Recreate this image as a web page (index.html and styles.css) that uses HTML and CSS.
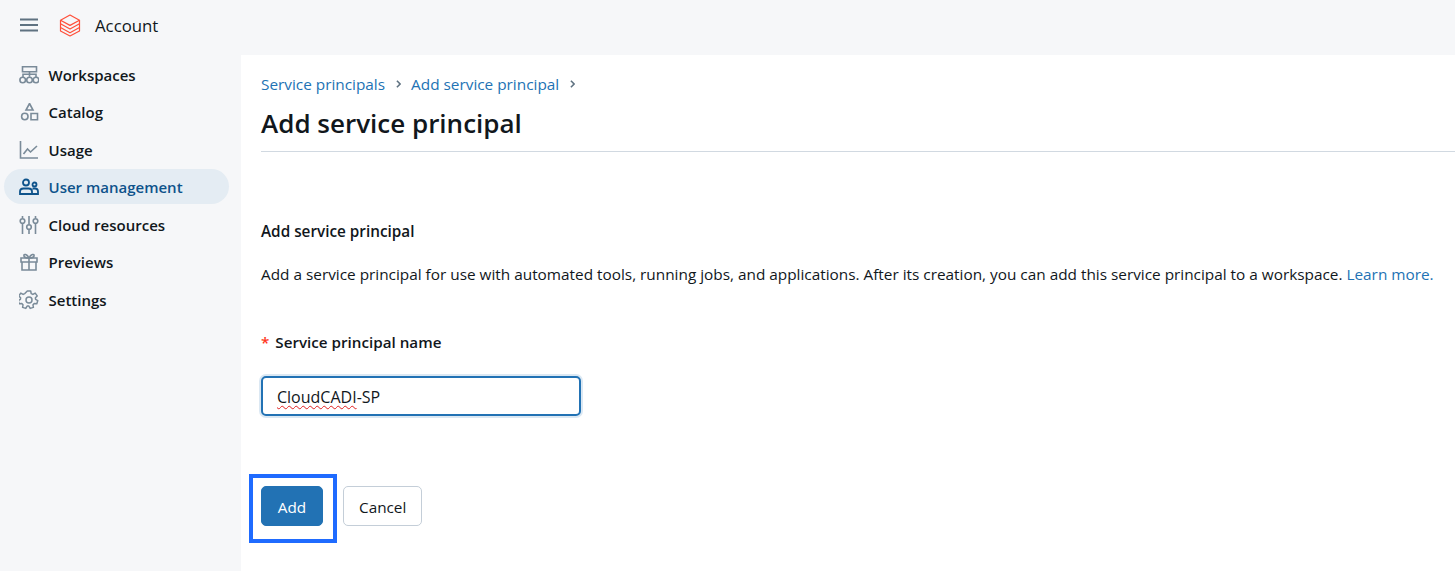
FILE: index.html
```html
<!DOCTYPE html>
<html lang="en">

<head>
    <meta charset="UTF-8">
    <title>Add service principal - Account</title>
    <link rel="stylesheet" href="styles.css">
</head>

<body>
    <header class="topbar">
        <svg class="menu-icon" width="18" height="14" viewBox="0 0 18 14" fill="none" stroke="#5f7281" stroke-width="1.8">
            <path d="M0 1.500h18M0 7h18M0 12.500h18" />
        </svg>
        <svg class="logo" width="22" height="23" viewBox="0 0 22 23" fill="none" stroke="#ff4f3a" stroke-width="1.2" stroke-linejoin="round">
            <path d="M11 1l9.500 5.200L11 11.400 1.500 6.200z" />
            <path d="M1.500 9.800l9.500 5.300 9.500-5.300" />
            <path d="M1.500 13.500l9.500 5.300 9.500-5.300" />
            <path d="M1.500 6.200v10.800l9.500 5 9.500-5V6.200" />
        </svg>
        <span class="account">Account</span>
    </header>

    <div class="layout">
        <nav class="sidebar">
            <a class="nav-item">
                <svg width="20" height="18" viewBox="0 0 20 18" fill="none" stroke="#7a8b99" stroke-width="1.6">
                    <path d="M3.500 0.800h14v5h-14zM10.500 5.800v5M4 11V8.300h13V11" />
                    <circle cx="3.700" cy="14" r="2.800" />
                    <circle cx="10.500" cy="14" r="2.800" />
                    <circle cx="17" cy="14" r="2.800" />
                </svg>
                Workspaces
            </a>
            <a class="nav-item">
                <svg width="20" height="18" viewBox="0 0 20 18" fill="none" stroke="#7a8b99" stroke-width="1.6">
                    <path d="M10.500 0.500l3.500 6.500H7z" />
                    <circle cx="5.800" cy="13.500" r="3.200" />
                    <path d="M12 10.500h6.500v6.200H12z" />
                </svg>
                Catalog
            </a>
            <a class="nav-item">
                <svg width="20" height="18" viewBox="0 0 20 18" fill="none" stroke="#7a8b99" stroke-width="1.6">
                    <path d="M1.500 0v17h17.500" />
                    <path d="M4.500 13l4-5 3 3 6.500-6" />
                </svg>
                Usage
            </a>
            <a class="nav-item active">
                <svg width="20" height="18" viewBox="0 0 20 18" fill="none" stroke="#0e538b" stroke-width="1.8">
                    <circle cx="7" cy="4.500" r="3" />
                    <circle cx="15.500" cy="6.500" r="2" />
                    <path d="M1 16v-2.500c0-2 1.500-3 3.500-3h5c2 0 3.500 1 3.500 3V16zM13.500 10.500H16c2 0 3 1 3 3V16h-6" />
                </svg>
                User management
            </a>
            <a class="nav-item">
                <svg width="20" height="18" viewBox="0 0 20 18" fill="none" stroke="#7a8b99" stroke-width="1.6">
                    <path d="M3.500 0v2M3.500 8v10M10 0v8M10 14v4M16.500 0v2M16.500 8v10" />
                    <circle cx="3.500" cy="5" r="2.300" />
                    <circle cx="10" cy="11" r="2.300" />
                    <circle cx="16.500" cy="5" r="2.300" />
                </svg>
                Cloud resources
            </a>
            <a class="nav-item">
                <svg width="20" height="18" viewBox="0 0 20 18" fill="none" stroke="#7a8b99" stroke-width="1.6">
                    <path d="M2 5h16v4H2zM3 9v8h14V9M10 5v12" />
                    <path d="M10 5C8 1 4.500 0.500 5 3c0.300 1.500 3 2 5 2zM10 5c2-4 5.500-4.500 5-2-0.300 1.500-3 2-5 2z" />
                </svg>
                Previews
            </a>
            <a class="nav-item">
                <svg width="20" height="20" viewBox="0 0 20 20" fill="none" stroke="#7a8b99" stroke-width="1.5" stroke-linejoin="round">
                    <circle cx="10" cy="10" r="3" />
                    <path d="M8.300 1h3.400l.5 2.600 1.700.8 2.300-1.300 2 2.800-1.800 1.900.2 1.600 2.200 1.200-1 3.100-2.600-.2-1.200 1.300.4 2.600-3.200 1-1.300-2.300h-1.800l-1.300 2.300-3.200-1 .4-2.600-1.200-1.300-2.600.2-1-3.100 2.200-1.200.2-1.600-1.800-1.900 2-2.800 2.300 1.300 1.700-.8z" />
                </svg>
                Settings
            </a>
        </nav>

        <main class="content">
            <div class="breadcrumbs">
                <a class="link">Service principals</a>
                <svg class="sep" width="5" height="8" viewBox="0 0 6 10" fill="none" stroke="#5f7281" stroke-width="2">
                    <path d="M1 1l4 4-4 4" />
                </svg>
                <a class="link">Add service principal</a>
                <svg class="sep" width="5" height="8" viewBox="0 0 6 10" fill="none" stroke="#5f7281" stroke-width="2">
                    <path d="M1 1l4 4-4 4" />
                </svg>
            </div>
            <h1>Add service principal</h1>
            <hr>

            <h2>Add service principal</h2>
            <p class="intro">Add a service principal for use with automated tools, running jobs, and applications. After its creation, you can add this service principal to a workspace. <a class="link">Learn more.</a></p>

            <p class="field-label"><span class="required">*</span>Service principal name</p>
            <div class="text-input"><span class="misspelled">CloudCADI</span>-SP</div>

            <div class="actions">
                <div class="add-wrap">
                    <button class="btn btn-primary">Add</button>
                    <span class="callout"></span>
                </div>
                <button class="btn">Cancel</button>
            </div>
        </main>
    </div>
</body>

</html>
```

FILE: styles.css
```css
* {
    box-sizing: border-box;
}

html, body {
    height: 100%;
}

body {
    margin: 0;
    display: flex;
    flex-direction: column;
    overflow: hidden;
    font-family: 'Open Sans', 'Noto Sans', sans-serif;
    font-size: 15px;
    background-color: #f6f7f9;
    color: #11171c;
}

.topbar {
    height: 55px;
    flex: none;
    display: flex;
    align-items: center;
    padding: 0 0 5px 20px;
}

.logo {
    margin-left: 21px;
}

.account {
    margin-left: 14px;
    font-size: 16.8px;
}

.layout {
    flex: 1;
    display: flex;
    min-height: 0;
}

.sidebar {
    width: 241px;
    flex: none;
    display: flex;
    flex-direction: column;
    gap: 2.5px;
    padding: 1.5px 12px 0 4px;
}

.nav-item {
    height: 35px;
    display: flex;
    align-items: center;
    gap: 9.5px;
    padding: 1px 0 0 15px;
    border-radius: 18px;
    font-weight: 600;
}

.nav-item svg {
    flex: none;
}

.nav-item.active {
    background-color: #e4ecf3;
    color: #0e538b;
}

.content {
    flex: 1;
    background-color: #fff;
    padding: 18px 0 0 20px;
}

.breadcrumbs {
    display: flex;
    align-items: center;
    gap: 10.5px;
    height: 22px;
    font-size: 15.35px;
}

.link {
    color: #2272b4;
}

h1 {
    margin: 10px 0 0;
    font-size: 26px;
    line-height: 36px;
    font-weight: 600;
}

hr {
    margin: 10px 0 0;
    border: none;
    border-top: 1px solid #d1d9e1;
}

h2 {
    margin: 68px 0 0;
    font-size: 15.3px;
    line-height: 22px;
    font-weight: 600;
}

.intro {
    margin: 21px 0 0;
    font-size: 15.35px;
    line-height: 22px;
    white-space: nowrap;
}

.field-label {
    margin: 46px 0 0;
    font-size: 15.2px;
    line-height: 22px;
    font-weight: 600;
}

.required {
    color: #ff3621;
    margin-right: 6px;
}

.text-input {
    width: 320px;
    height: 40px;
    margin-top: 23px;
    padding: 2px 0 0 14px;
    display: flex;
    align-items: center;
    font-size: 16px;
    background-color: #fff;
    border: 2px solid #2272b4;
    border-radius: 5px;
    box-shadow: 0 0 0 2px #dbe8f3;
}

.misspelled {
    text-decoration: underline wavy #e02020 1.2px;
    text-underline-offset: 2px;
}

.actions {
    display: flex;
    gap: 20px;
    margin-top: 70px;
}

.add-wrap {
    position: relative;
}

.btn {
    height: 40px;
    padding: 2px 15px 0;
    font: inherit;
    font-size: 15.3px;
    color: #11171c;
    background-color: #fff;
    border: 1px solid #c4ced8;
    border-radius: 5px;
}

.btn-primary {
    width: 62px;
    color: #fff;
    background-color: #2272b4;
    border-color: #2272b4;
}

.callout {
    position: absolute;
    left: -12px;
    top: -12px;
    width: 88px;
    height: 69px;
    border: 4px solid #1f6bff;
}
```
